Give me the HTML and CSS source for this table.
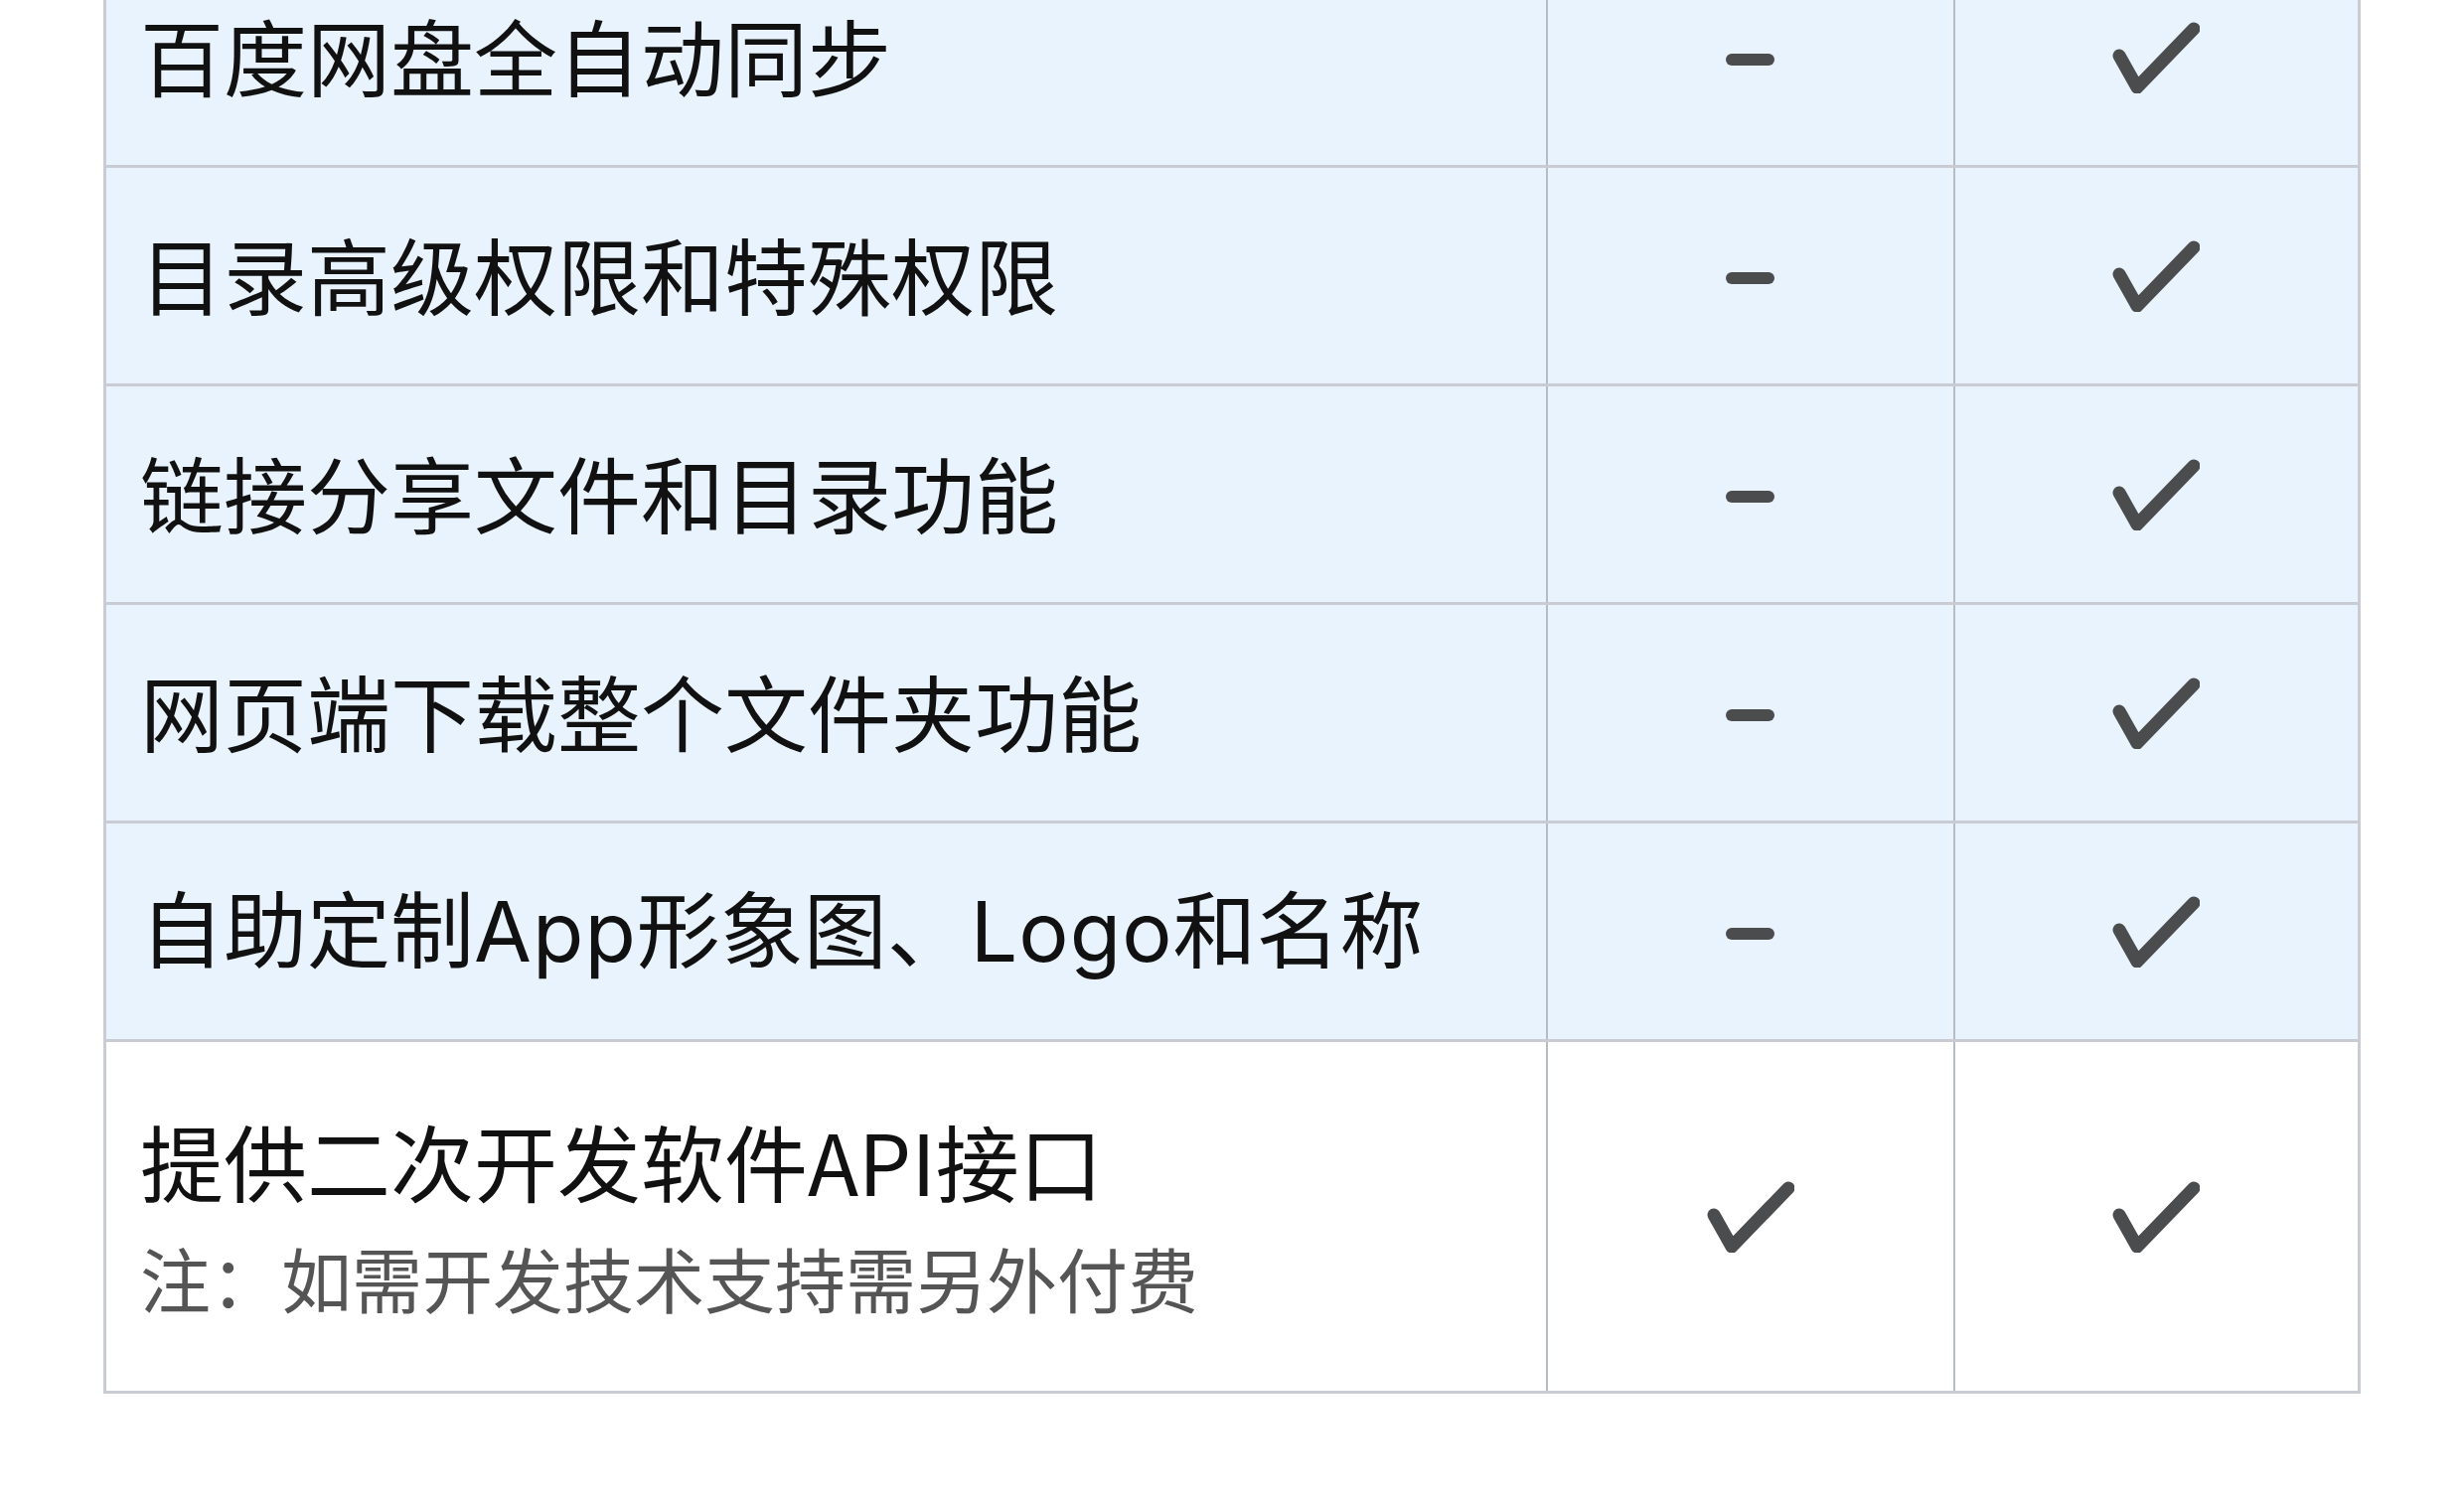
FILE: index.html
```html
<!DOCTYPE html>
<html lang="zh-CN">
<head>
<meta charset="utf-8">
<title>功能对比</title>
<link rel="stylesheet" href="styles.css">
</head>
<body>
<div class="page">
  <table class="compare">
    <colgroup>
      <col class="c-feature">
      <col class="c-basic">
      <col class="c-pro">
    </colgroup>
    <tbody>
      <tr class="hl">
        <td class="feat">百度网盘全自动同步</td>
        <td class="mark"><span class="dash"></span></td>
        <td class="mark"><svg class="check" viewBox="0 0 88 72"><path d="M7 34 L25 66 L82 7"/></svg></td>
      </tr>
      <tr class="hl">
        <td class="feat">目录高级权限和特殊权限</td>
        <td class="mark"><span class="dash"></span></td>
        <td class="mark"><svg class="check" viewBox="0 0 88 72"><path d="M7 34 L25 66 L82 7"/></svg></td>
      </tr>
      <tr class="hl">
        <td class="feat">链接分享文件和目录功能</td>
        <td class="mark"><span class="dash"></span></td>
        <td class="mark"><svg class="check" viewBox="0 0 88 72"><path d="M7 34 L25 66 L82 7"/></svg></td>
      </tr>
      <tr class="hl">
        <td class="feat">网页端下载整个文件夹功能</td>
        <td class="mark"><span class="dash"></span></td>
        <td class="mark"><svg class="check" viewBox="0 0 88 72"><path d="M7 34 L25 66 L82 7"/></svg></td>
      </tr>
      <tr class="hl">
        <td class="feat">自助定制<span class="latin">App</span>形象图、<span class="latin">Logo</span>和名称</td>
        <td class="mark"><span class="dash"></span></td>
        <td class="mark"><svg class="check" viewBox="0 0 88 72"><path d="M7 34 L25 66 L82 7"/></svg></td>
      </tr>
      <tr class="tall">
        <td class="feat">
          <div class="main">提供二次开发软件API接口</div>
          <div class="note">注：如需开发技术支持需另外付费</div>
        </td>
        <td class="mark"><svg class="check" viewBox="0 0 88 72"><path d="M7 34 L25 66 L82 7"/></svg></td>
        <td class="mark"><svg class="check" viewBox="0 0 88 72"><path d="M7 34 L25 66 L82 7"/></svg></td>
      </tr>
    </tbody>
  </table>
</div>
</body>
</html>
```

FILE: styles.css
```css
html, body {
  margin: 0;
  padding: 0;
  background: #ffffff;
}

body {
  font-family: "Noto Sans CJK SC", "Noto Sans", sans-serif;
  color: #111111;
  overflow: hidden;
}

.page {
  padding: 0 104px;
  margin-top: -54px;
}

.compare {
  width: 100%;
  border-collapse: collapse;
  table-layout: fixed;
  border: 3px solid #c9cdd3;
}

.c-feature { width: 1451px; }
.c-basic { width: 410px; }
.c-pro { width: auto; }

.compare td {
  border-top: 3px solid #c9cdd3;
  border-bottom: 3px solid #c9cdd3;
  border-left: 2px solid #b7bcc3;
  border-right: 2px solid #b7bcc3;
  padding: 0;
  vertical-align: middle;
}

.compare td:first-child { border-left: 3px solid #c9cdd3; }
.compare td:last-child { border-right: 3px solid #c9cdd3; }

.compare tr.hl { height: 220px; }
.compare tr.hl td { background: #e9f3fe; }

.compare tr.tall { height: 354px; }
.compare tr.tall td { background: #ffffff; }

.compare td.feat {
  padding-left: 34px;
  padding-bottom: 6px;
  font-size: 84px;
  line-height: 110px;
  color: #111111;
  white-space: nowrap;
}

.latin {
  font-family: "Inter", "Noto Sans", sans-serif;
  letter-spacing: 1px;
}

.main {
  font-size: 84px;
  line-height: 110px;
  color: #111111;
}

.note {
  margin-top: 16px;
  font-size: 71px;
  line-height: 92px;
  color: #555555;
}

.mark {
  text-align: center;
}

.dash {
  display: inline-block;
  width: 49px;
  height: 12px;
  border-radius: 6px;
  background: #4b4c4e;
  vertical-align: middle;
}

.check {
  display: inline-block;
  width: 88px;
  height: 72px;
  vertical-align: middle;
}

.check path {
  fill: none;
  stroke: #4b4c4e;
  stroke-width: 13;
  stroke-linecap: round;
  stroke-linejoin: round;
}
```
